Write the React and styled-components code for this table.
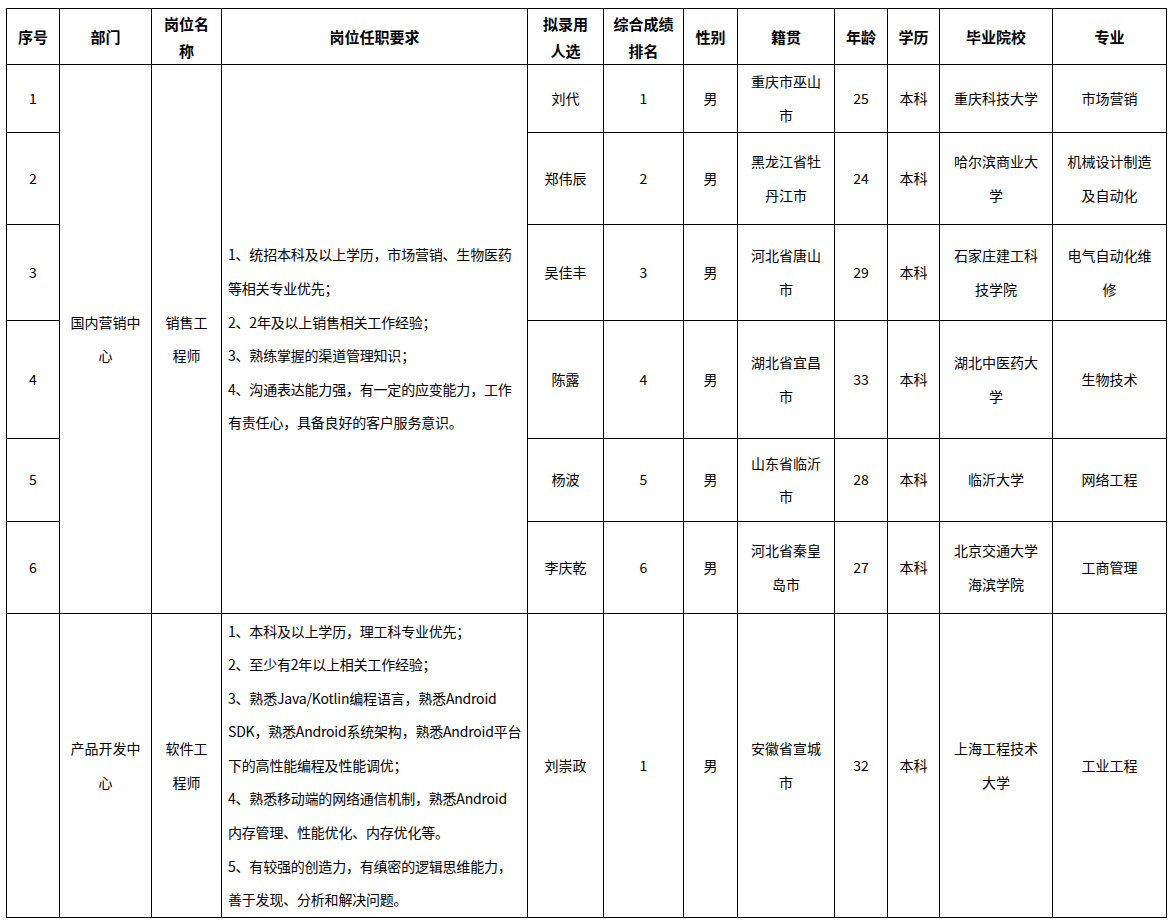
import styled, { createGlobalStyle } from 'styled-components';

const GlobalStyle = createGlobalStyle`
  html, body {
    margin: 0;
    padding: 0;
    background: #ffffff;
  }
  body {
    font-family: "Noto Sans CJK SC", "Noto Sans", sans-serif;
    color: #000000;
  }
`;

const colWidths = [53, 92, 70, 306, 76, 80, 54, 97, 53, 52, 113, 114];

const headers = [
  ['序号'],
  ['部门'],
  ['岗位名', '称'],
  ['岗位任职要求'],
  ['拟录用', '人选'],
  ['综合成绩', '排名'],
  ['性别'],
  ['籍贯'],
  ['年龄'],
  ['学历'],
  ['毕业院校'],
  ['专业'],
];

const salesReq = [
  '1、统招本科及以上学历，市场营销、生物医药',
  '等相关专业优先；',
  '2、2年及以上销售相关工作经验；',
  '3、熟练掌握的渠道管理知识；',
  '4、沟通表达能力强，有一定的应变能力，工作',
  '有责任心，具备良好的客户服务意识。',
];

const softReq = [
  '1、本科及以上学历，理工科专业优先；',
  '2、至少有2年以上相关工作经验；',
  '3、熟悉Java/Kotlin编程语言，熟悉Android',
  'SDK，熟悉Android系统架构，熟悉Android平台',
  '下的高性能编程及性能调优；',
  '4、熟悉移动端的网络通信机制，熟悉Android',
  '内存管理、性能优化、内存优化等。',
  '5、有较强的创造力，有缜密的逻辑思维能力，',
  '善于发现、分析和解决问题。',
];

const salesRows = [
  { no: '1', name: '刘代', rank: '1', origin: ['重庆市巫山', '市'], age: '25', school: ['重庆科技大学'], major: ['市场营销'], h: 68 },
  { no: '2', name: '郑伟辰', rank: '2', origin: ['黑龙江省牡', '丹江市'], age: '24', school: ['哈尔滨商业大', '学'], major: ['机械设计制造', '及自动化'], h: 92 },
  { no: '3', name: '吴佳丰', rank: '3', origin: ['河北省唐山', '市'], age: '29', school: ['石家庄建工科', '技学院'], major: ['电气自动化维', '修'], h: 96 },
  { no: '4', name: '陈露', rank: '4', origin: ['湖北省宜昌', '市'], age: '33', school: ['湖北中医药大', '学'], major: ['生物技术'], h: 118 },
  { no: '5', name: '杨波', rank: '5', origin: ['山东省临沂', '市'], age: '28', school: ['临沂大学'], major: ['网络工程'], h: 83 },
  { no: '6', name: '李庆乾', rank: '6', origin: ['河北省秦皇', '岛市'], age: '27', school: ['北京交通大学', '海滨学院'], major: ['工商管理'], h: 92 },
];

const Lines = ({ lines }) =>
  lines.map((l, i) => <Line key={i}>{l}</Line>);

const PersonCells = ({ row }) => (
  <>
    <Td>{row.name}</Td>
    <Td>{row.rank}</Td>
    <Td>男</Td>
    <Td><Lines lines={row.origin} /></Td>
    <Td>{row.age}</Td>
    <Td>本科</Td>
    <Td><Lines lines={row.school} /></Td>
    <Td><Lines lines={row.major} /></Td>
  </>
);

const App = () => {
  return (
    <Page>
      <GlobalStyle />
      <Table>
        <colgroup>
          {colWidths.map((w, i) => (
            <Col key={i} $w={w} />
          ))}
        </colgroup>
        <thead>
          <Tr $h={56}>
            {headers.map((h, i) => (
              <Th key={i}>
                <Lines lines={h} />
              </Th>
            ))}
          </Tr>
        </thead>
        <tbody>
          {salesRows.map((row, i) => (
            <Tr key={row.no} $h={row.h}>
              <Td>{row.no}</Td>
              {i === 0 && (
                <>
                  <Td rowSpan={6}><Lines lines={['国内营销中', '心']} /></Td>
                  <Td rowSpan={6}><Lines lines={['销售工', '程师']} /></Td>
                  <Td rowSpan={6} $left><Lines lines={salesReq} /></Td>
                </>
              )}
              <PersonCells row={row} />
            </Tr>
          ))}
          <Tr $h={304}>
            <Td></Td>
            <Td><Lines lines={['产品开发中', '心']} /></Td>
            <Td><Lines lines={['软件工', '程师']} /></Td>
            <Td $left><Lines lines={softReq} /></Td>
            <PersonCells
              row={{
                name: '刘崇政',
                rank: '1',
                origin: ['安徽省宣城', '市'],
                age: '32',
                school: ['上海工程技术', '大学'],
                major: ['工业工程'],
              }}
            />
          </Tr>
        </tbody>
      </Table>
    </Page>
  );
};

const Page = styled.div`
  padding: 8px 0 0 6px;
`;

const Table = styled.table`
  border-collapse: collapse;
  table-layout: fixed;
  width: 1160px;
`;

const Col = styled.col`
  width: ${(p) => p.$w}px;
`;

const Tr = styled.tr`
  height: ${(p) => p.$h}px;
`;

const Th = styled.th`
  border: 1px solid #000;
  padding: 0 4px;
  font-size: 15px;
  font-weight: 700;
  line-height: 27px;
  text-align: center;
  vertical-align: middle;
`;

const Td = styled.td`
  border: 1px solid #000;
  padding: 0 ${(p) => (p.$left ? '6px' : '4px')};
  font-size: 14px;
  font-weight: 400;
  line-height: 33.6px;
  letter-spacing: ${(p) => (p.$left ? '-0.2px' : '0')};
  text-align: ${(p) => (p.$left ? 'left' : 'center')};
  vertical-align: middle;
  overflow: hidden;
`;

const Line = styled.div`
  white-space: nowrap;
`;

export default App;
